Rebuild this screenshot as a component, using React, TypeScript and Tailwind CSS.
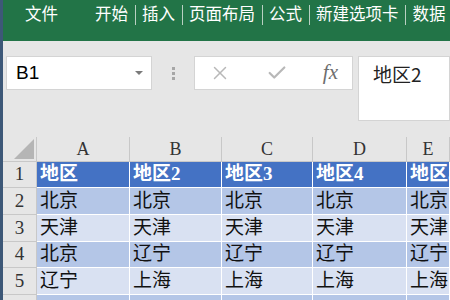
import React from 'react';
import { X, Check } from 'lucide-react';

const tabs = ['开始', '插入', '页面布局', '公式', '新建选项卡', '数据'];
const cols = ['A', 'B', 'C', 'D', 'E'];
const header = ['地区', '地区2', '地区3', '地区4', '地区5'];
const rows = [
  ['北京', '北京', '北京', '北京', '北京'],
  ['天津', '天津', '天津', '天津', '天津'],
  ['北京', '辽宁', '辽宁', '辽宁', '辽宁'],
  ['辽宁', '上海', '上海', '上海', '上海'],
];

const serif = { fontFamily: '"Liberation Serif", "Noto Sans CJK SC", serif' };

const App: React.FC = () => {
  return (
    <div className="w-[450px] h-[300px] overflow-hidden bg-[#e6e6e6] border-l-[3px] border-[#3d5878] flex flex-col" style={{ fontFamily: '"Noto Sans CJK SC", sans-serif' }}>
      {/* Ribbon tabs */}
      <div className="h-[41px] shrink-0 bg-[#227447] flex items-start pt-[2px] text-white text-[16.5px] leading-[22px] whitespace-nowrap">
        <span className="ml-[22px] mr-[37px]">文件</span>
        {tabs.map((t, i) => (
          <React.Fragment key={t}>
            {i > 0 && <span className="w-px h-[20px] mt-[3px] mx-[6.5px] bg-[#b9d0c2]" />}
            <span>{t}</span>
          </React.Fragment>
        ))}
      </div>

      {/* Formula bar */}
      <div className="h-[96px] shrink-0 flex items-start pt-[15px] pl-[3px]">
        <div className="w-[146px] h-[34px] bg-white border border-[#d4d4d4] flex items-center justify-between pl-[9px] pr-[8px]">
          <span className="text-[19px] text-black" style={{ fontFamily: '"Liberation Sans", sans-serif' }}>B1</span>
          <span className="w-0 h-0 border-l-[4px] border-r-[4px] border-t-[4px] border-l-transparent border-r-transparent border-t-[#7a7a7a]" />
        </div>
        <div className="w-[42px] h-[34px] flex flex-col items-center justify-center gap-[2px]">
          <span className="w-[3px] h-[3px] bg-[#a6a6a6]" />
          <span className="w-[3px] h-[3px] bg-[#a6a6a6]" />
          <span className="w-[3px] h-[3px] bg-[#a6a6a6]" />
        </div>
        <div className="w-[159px] h-[34px] bg-white border border-[#d4d4d4] flex items-center justify-between pl-[14px] pr-[14px]">
          <X className="w-[22px] h-[22px] text-[#b8b8b8]" strokeWidth={1.6} />
          <Check className="w-[22px] h-[22px] text-[#b8b8b8]" strokeWidth={2.4} />
          <span className="text-[21px] italic text-[#6e6e6e]" style={{ fontFamily: '"Liberation Serif", serif' }}>fx</span>
        </div>
        <div className="ml-[5px] flex-1 h-[65px] bg-white border border-[#d4d4d4] pl-[14px] pt-[3px] text-[19px] text-[#222]">
          地区2
        </div>
      </div>

      {/* Sheet */}
      <div className="grid grid-cols-[34px_93px_92px_91px_94px_1fr] grid-rows-[25px_26px_27px_27px_26px_27px_1fr] flex-1" style={serif}>
        <div className="bg-[#e6e6e6] border-r border-b border-[#c8c8c8] flex items-end justify-end pr-[2px] pb-[2px]">
          <svg width="20" height="20" viewBox="0 0 20 20">
            <polygon points="20,0 20,20 0,20" fill="#b5b5b5" />
          </svg>
        </div>
        {cols.map((c) => (
          <div key={c} className="bg-[#e6e6e6] border-r border-b border-[#c8c8c8] flex items-center justify-center text-[18px] text-[#333]">
            {c}
          </div>
        ))}

        <div className="bg-[#e6e6e6] border-r border-b border-[#c8c8c8] flex items-center justify-center text-[19px] text-[#333]">1</div>
        {header.map((h) => (
          <div key={h} className="bg-[#4472c4] border-r border-b border-white flex items-center pl-[3px] text-[19px] font-bold text-white whitespace-nowrap overflow-hidden">
            {h}
          </div>
        ))}

        {rows.map((r, ri) => (
          <React.Fragment key={ri}>
            <div className="bg-[#e6e6e6] border-r border-b border-[#c8c8c8] flex items-center justify-center text-[19px] text-[#333]">{ri + 2}</div>
            {r.map((v, ci) => (
              <div
                key={ci}
                className={`${ri % 2 === 0 ? 'bg-[#b4c6e7]' : 'bg-[#d9e1f2]'} border-r border-b border-white flex items-center pl-[3px] text-[19px] text-[#111] whitespace-nowrap overflow-hidden`}
              >
                {v}
              </div>
            ))}
          </React.Fragment>
        ))}

        <div className="bg-[#e6e6e6] border-r border-[#c8c8c8]" />
        {cols.map((c) => (
          <div key={c} className="bg-[#b4c6e7] border-r border-white" />
        ))}
      </div>
    </div>
  );
};

export default App;
